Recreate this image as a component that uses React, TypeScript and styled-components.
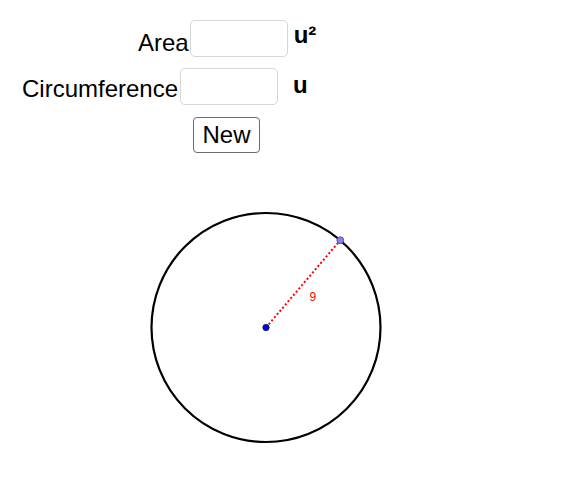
import React from 'react';
import styled, { createGlobalStyle } from 'styled-components';

const GlobalStyle = createGlobalStyle`
  html, body {
    margin: 0;
    padding: 0;
    background: #ffffff;
  }
  body {
    font-family: "Liberation Sans", Arial, sans-serif;
    color: #000000;
  }
`;

const Page = styled.div`
  width: 563px;
  height: 500px;
  overflow: hidden;
  display: flex;
  flex-direction: column;
`;

const Form = styled.div`
  display: flex;
  flex-direction: column;
  padding-top: 20px;
  gap: 11px;
`;

const Row = styled.div<{ indent: number }>`
  display: flex;
  align-items: flex-start;
  padding-left: ${props => props.indent}px;
  height: 37px;
`;

const Label = styled.span<{ drop: number }>`
  font-size: 24px;
  line-height: 28px;
  margin-top: ${props => props.drop}px;
  white-space: nowrap;
`;

const Field = styled.input<{ w: number; gapLeft: number }>`
  box-sizing: border-box;
  width: ${props => props.w}px;
  height: 37px;
  margin: 0 0 0 ${props => props.gapLeft}px;
  border: 1px solid #d6d6d6;
  border-radius: 5px;
  background: #ffffff;
  outline: none;
  padding: 0 6px;
  font-family: "Liberation Sans", Arial, sans-serif;
  font-size: 20px;
`;

const Unit = styled.span<{ gapLeft: number; drop: number }>`
  font-size: 24px;
  font-weight: 700;
  line-height: 28px;
  margin-left: ${props => props.gapLeft}px;
  margin-top: ${props => props.drop}px;
`;

const ButtonRow = styled.div`
  display: flex;
  padding-left: 193px;
  margin-top: 12px;
`;

const NewButton = styled.button`
  box-sizing: border-box;
  width: 67px;
  height: 36px;
  padding: 0;
  border: 1px solid #6b6b6b;
  border-radius: 4px;
  background: #ffffff;
  color: #000000;
  font-family: "Liberation Sans", Arial, sans-serif;
  font-size: 24px;
  line-height: 28px;
  cursor: pointer;
`;

const Canvas = styled.svg`
  display: block;
  flex: none;
`;

const CX = 266;
const CY = 327.5;
const R = 114.5;
const PX = 340.3;
const PY = 240.2;

const Drawing: React.FC = () => (
  <Canvas width={563} height={347} viewBox="0 153 563 347">
    <circle cx={CX} cy={CY} r={R} fill="none" stroke="#000000" strokeWidth={2.2} />
    <line
      x1={CX}
      y1={CY}
      x2={PX}
      y2={PY}
      stroke="#ff0000"
      strokeWidth={2}
      strokeDasharray="2 2.2"
    />
    <text
      x={309.5}
      y={300.5}
      fill="#ff0000"
      fontSize={12}
      fontFamily='"Liberation Sans", Arial, sans-serif'
    >
      9
    </text>
    <circle cx={CX} cy={CY} r={3.2} fill="#0000ff" stroke="#222222" strokeWidth={0.8} />
    <circle cx={PX} cy={PY} r={3.4} fill="#7f7fff" stroke="#555555" strokeWidth={0.9} />
  </Canvas>
);

const App: React.FC = () => (
  <>
    <GlobalStyle />
    <Page>
      <Form>
        <Row indent={138}>
          <Label drop={9}>Area</Label>
          <Field w={98} gapLeft={1} />
          <Unit gapLeft={6} drop={1}>u²</Unit>
        </Row>
        <Row indent={22}>
          <Label drop={7}>Circumference</Label>
          <Field w={98} gapLeft={2} />
          <Unit gapLeft={15} drop={3}>u</Unit>
        </Row>
      </Form>
      <ButtonRow>
        <NewButton>New</NewButton>
      </ButtonRow>
      <Drawing />
    </Page>
  </>
);

export default App;
